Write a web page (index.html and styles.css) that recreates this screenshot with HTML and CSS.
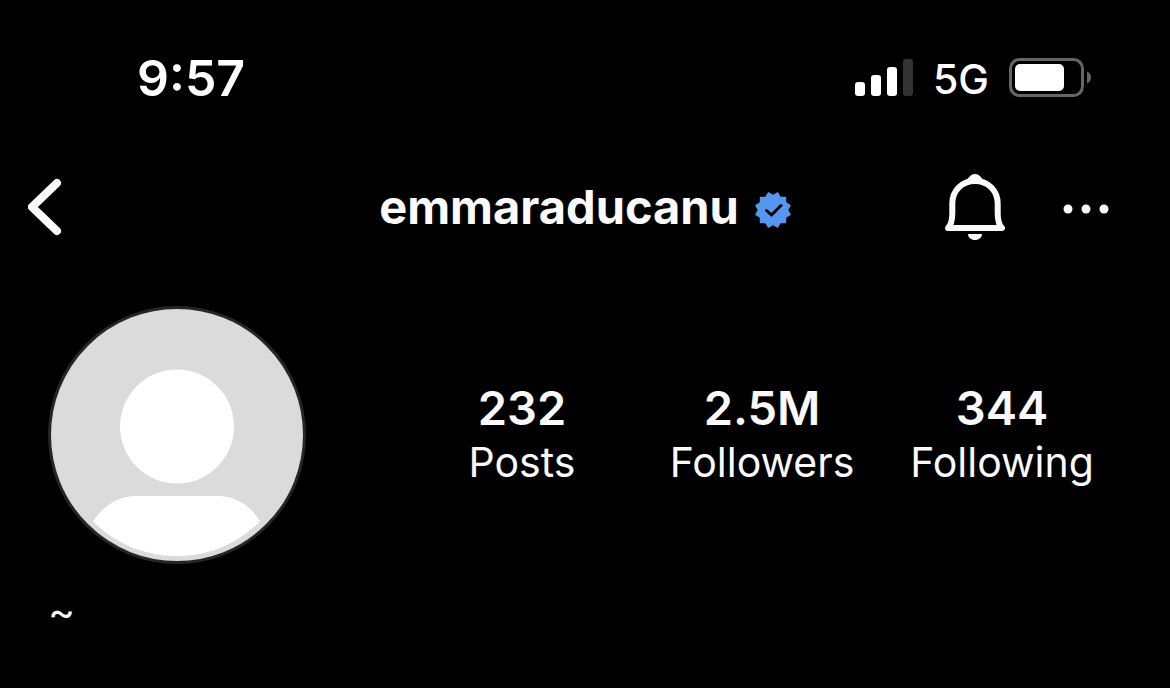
FILE: index.html
```
<!DOCTYPE html>
<html lang="en">

<head>
    <meta charset="UTF-8">
    <meta name="viewport" content="width=device-width, initial-scale=1.0">
    <title>emmaraducanu</title>
    <link rel="stylesheet" href="styles.css">
</head>

<body>
    <div class="status-bar">
        <time class="clock">9:57</time>
        <div class="indicators">
            <svg class="signal" width="58" height="39" viewBox="0 0 58 39" aria-hidden="true">
                <rect x="0" y="24" width="10" height="14" rx="3" />
                <rect x="16" y="17" width="10" height="21" rx="3" />
                <rect x="32" y="9" width="10" height="29" rx="3" />
                <rect class="off" x="48" y="1" width="10" height="37" rx="3" />
            </svg>
            <span class="network">5G</span>
            <svg class="battery" width="82" height="39" viewBox="0 0 82 39" aria-hidden="true">
                <rect class="shell" x="1.5" y="1.5" width="72" height="36" rx="9" />
                <rect x="6" y="6" width="49" height="27" rx="5" />
                <path class="cap" d="M78 13.500c2.500 1 4 3.200 4 6s-1.500 5-4 6z" />
            </svg>
        </div>
    </div>

    <header class="nav">
        <button type="button" class="icon-btn" aria-label="Back">
            <svg width="34" height="58" viewBox="0 0 34 58">
                <path class="line" d="M29 5 4 29l25 24" stroke-width="8" />
            </svg>
        </button>
        <div class="title">
            <h1>emmaraducanu</h1>
            <svg class="verified" width="36" height="42" viewBox="0 0 36 42" role="img" aria-label="Verified">
                <path d="M13.200 6 18 8.700 22.800 6 25.650 10.750 31.150 10.850 31.250 16.350 36 19.200 33.300 24 36 28.800 31.250 31.650 31.150 37.150 25.650 37.250 22.800 42 18 39.300 13.200 42 10.350 37.250 4.850 37.150 4.750 31.650 0 28.800 2.700 24 0 19.200 4.750 16.350 4.850 10.850 10.350 10.750Z" />
                <path class="tick" d="m11.500 24.500 5 4.500 9.500-9.500" />
            </svg>
        </div>
        <div class="actions">
            <button type="button" class="icon-btn" aria-label="Notifications">
                <svg width="60" height="66" viewBox="0 0 60 66">
                    <path class="line" d="M3 54c3.500-3.500 4.200-8 4.300-14v-10C7.300 16.500 17 7 30 7s22.700 9.500 22.700 23v10c.1 6 .8 10.500 4.300 14z" stroke-width="6" />
                    <path d="M17 8.500C24 6 24 0 30 0s6 6 13 8.500z" />
                    <path d="M23 60h14c0 3.500-3 6-7 6s-7-2.500-7-6z" />
                </svg>
            </button>
            <button type="button" class="icon-btn" aria-label="More options">
                <svg width="46" height="14" viewBox="0 0 46 14">
                    <circle cx="5" cy="9" r="4.500" />
                    <circle cx="23" cy="9" r="4.500" />
                    <circle cx="41" cy="9" r="4.500" />
                </svg>
            </button>
        </div>
    </header>

    <main class="profile">
        <div class="summary">
            <svg class="avatar" width="258" height="258" viewBox="0 0 258 258" role="img" aria-label="Profile photo">
                <circle class="ring" cx="129" cy="129" r="127.500" />
                <circle cx="129" cy="120.500" r="57" />
                <path d="M45 215.500C55 200 70 190 88 190h82c18 0 33 10 42 25.500-23 22.500-51 34.500-83 34.500s-61-12-84-34.500z" />
            </svg>
            <ul class="stats">
                <li><a href="#"><strong>232</strong>Posts</a></li>
                <li><a href="#"><strong>2.5M</strong>Followers</a></li>
                <li><a href="#"><strong>344</strong>Following</a></li>
            </ul>
        </div>
        <p class="bio">~</p>
    </main>
</body>

</html>
```
FILE: styles.css
```
* {
    box-sizing: border-box;
}

body {
    margin: 0;
    background: #000;
    color: #fafafa;
    font-family: Inter, "Liberation Sans", sans-serif;
    font-size: 41px;
    line-height: 54px;
}

svg {
    display: block;
    fill: currentColor;
}

/* Status bar */
.status-bar {
    display: flex;
    align-items: center;
    justify-content: space-between;
    height: 155px;
    padding: 0 79px 0 137px;
    color: #fff;
}

.clock {
    font-size: 50px;
    font-weight: 600;
}

.indicators {
    display: flex;
    align-items: center;
    gap: 20px;
}

.network {
    padding-top: 2px;
    font-weight: 500;
}

.signal .off {
    fill: #333;
}

.battery .shell {
    fill: none;
    stroke: #666;
    stroke-width: 3;
}

.battery .cap {
    fill: #666;
}

/* Top navigation */
.nav {
    display: grid;
    grid-template-columns: 1fr auto 1fr;
    align-items: center;
    height: 104px;
    padding: 0 28px;
}

.icon-btn {
    justify-self: start;
    padding: 0;
    border: 0;
    background: none;
    color: inherit;
    cursor: pointer;
}

.line {
    fill: none;
    stroke: currentColor;
    stroke-linecap: round;
    stroke-linejoin: round;
}

.title {
    display: flex;
    align-items: center;
    gap: 16px;
}

h1 {
    margin: 0;
    font-size: 47px;
    font-weight: 700;
}

.verified {
    fill: #5596ee;
}

.verified .tick {
    fill: none;
    stroke: #000;
    stroke-width: 3;
    stroke-linecap: round;
}

.actions {
    display: flex;
    align-items: center;
    justify-content: flex-end;
    gap: 58px;
    padding-right: 33px;
}

/* Profile */
.profile {
    padding: 47px 48px 0;
}

.summary {
    display: flex;
    align-items: center;
    gap: 96px;
}

.avatar {
    flex: none;
    fill: #fff;
}

.avatar .ring {
    fill: #dbdbdb;
    stroke: #262626;
    stroke-width: 3;
}

.stats {
    display: grid;
    flex: 1;
    grid-template-columns: repeat(3, 1fr);
    margin: 0;
    padding: 0;
    list-style: none;
    text-align: center;
}

.stats a {
    color: inherit;
    text-decoration: none;
}

.stats strong {
    display: block;
    font-size: 47px;
    font-weight: 600;
}

.bio {
    margin: 20px 0 0;
}
```
